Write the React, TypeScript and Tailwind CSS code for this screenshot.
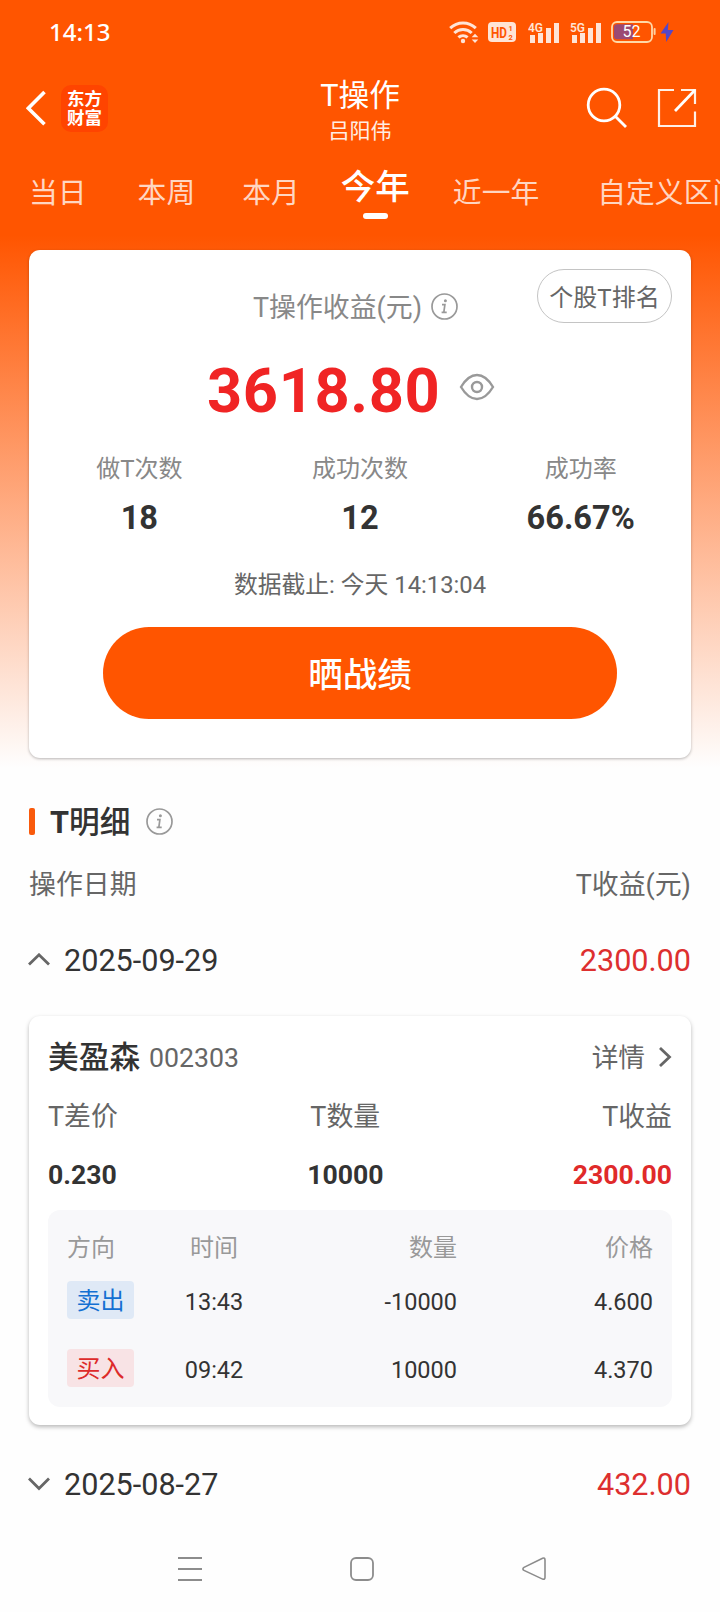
const tabs = [
  { label: '当日', gap: 'ml-[29px]' },
  { label: '本周', gap: 'ml-[51px]' },
  { label: '本月', gap: 'ml-[47px]' },
  { label: '今年', gap: 'ml-[41px]', active: true },
  { label: '近一年', gap: 'ml-[43px]' },
  { label: '自定义区间', gap: 'ml-[58px]' },
]

const stats = [
  { label: '做T次数', value: '18' },
  { label: '成功次数', value: '12' },
  { label: '成功率', value: '66.67%' },
]

const trades = [
  { side: '卖出', tag: 'bg-[#dfe9f6] text-[#1470d2]', time: '13:43', amount: '-10000', price: '4.600' },
  { side: '买入', tag: 'bg-[#f8e3e5] text-[#dd2a2a]', time: '09:42', amount: '10000', price: '4.370' },
]

function InfoIcon() {
  return (
    <svg width="27" height="27" viewBox="0 0 27 27" fill="none" stroke="#999" strokeWidth="1.7">
      <circle cx="13.5" cy="13.5" r="12.5" />
      <circle cx="14.4" cy="7.8" r="1.5" fill="#999" stroke="none" />
      <path d="M11 11.6h2.9l-1.1 7.8h2.9M10.6 19.4h2.4" />
    </svg>
  )
}

function Chevron({ up = false }: { up?: boolean }) {
  return (
    <svg width="22" height="14" viewBox="0 0 22 14" fill="none" stroke="#666" strokeWidth="2.8">
      <path d={up ? 'M1 11.500 11 1.800l10 9.700' : 'M1 1.5l10 10 10-10'} />
    </svg>
  )
}

function Signal({ label }: { label: string }) {
  return (
    <svg width="31" height="24" viewBox="0 0 31 24" fill="#ffe4d6">
      <text x="0" y="11.500" fontSize="13" fontWeight="600" textLength="15" lengthAdjust="spacingAndGlyphs">{label}</text>
      <rect x="2" y="15" width="5" height="8" />
      <rect x="10" y="13" width="5" height="10" />
      <rect x="18" y="8" width="5" height="15" />
      <rect x="26" y="3" width="5" height="20" />
    </svg>
  )
}

function StatusBar() {
  return (
    <div className="h-16 flex items-center pl-[49px] pr-[46px] text-white">
      <span className="font-['Noto_Sans'] font-medium text-[24px] leading-8">14:13</span>
      <div className="ml-auto flex items-center">
        <svg width="30" height="24" viewBox="0 0 30 24" fill="none" stroke="#ffe4d6" strokeWidth="3">
          <path d="M1.2 8.2a18.5 18.5 0 0 1 25.6 0M5.3 13a12.5 12.5 0 0 1 17.4 0M9.4 17.4a7 7 0 0 1 9.2 0" />
          <circle cx="14" cy="21" r="2.2" fill="#ffe4d6" stroke="none" />
          <path d="M22.7 17.3 26 13.8l3.3 3.5zM22.7 19.4h6.6L26 22.9z" fill="#ffe4d6" stroke="none" />
        </svg>
        <svg className="ml-[9px]" width="28" height="20" viewBox="0 0 28 20">
          <rect width="28" height="20" rx="4" fill="#ffe4d6" />
          <g fill="#ff5500" fontWeight="700">
            <text x="3" y="15.500" fontSize="15" textLength="16" lengthAdjust="spacingAndGlyphs">HD</text>
            <text x="20.500" y="9" fontSize="7.500">1</text>
            <text x="20.500" y="18" fontSize="7.500">2</text>
          </g>
        </svg>
        <div className="ml-[12px]"><Signal label="4G" /></div>
        <div className="ml-[11px]"><Signal label="5G" /></div>
        <svg className="ml-[10px]" width="45" height="22" viewBox="0 0 45 22">
          <rect x="1" y="1" width="40" height="20" rx="5" fill="none" stroke="#ffd9a8" strokeWidth="1.8" />
          <path d="M6 3.200h16v15H6a3 3 0 0 1-3-3v-9a3 3 0 0 1 3-3z" fill="#9b4a73" />
          <rect x="42.6" y="7" width="2" height="7" rx="1" fill="#ffd0a0" />
          <text x="11.500" y="16" fontSize="16" fill="#fff" textLength="18">52</text>
        </svg>
        <svg className="ml-[4px]" width="14" height="20" viewBox="0 0 14 20">
          <path d="M8.5 0 0.5 11.5h5.2L6.2 20 13.5 8H7.8z" fill="#5547c8" />
        </svg>
      </div>
    </div>
  )
}

function Header() {
  return (
    <header className="h-[88px] flex justify-between text-white">
      <div className="w-[220px] h-[88px] flex items-center pl-[26px]">
        <svg width="20" height="36" viewBox="0 0 20 36" fill="none" stroke="#fff" strokeWidth="3.6">
          <path d="M18.5 2 2.3 18.3l16.2 16" />
        </svg>
        <div className="ml-[15px] size-[47px] rounded-[10px] bg-[#ff4400] flex flex-col items-center justify-center pt-[2px] text-[17.5px] leading-[19.5px] font-bold">
          <span>东方</span>
          <span>财富</span>
        </div>
      </div>
      <div className="flex flex-col items-center pt-[13px]">
        <h1 className="text-[30.7px] leading-[37px]">T操作</h1>
        <p className="text-[21px] leading-[35px] text-[#ffeee4]">吕阳伟</p>
      </div>
      <div className="w-[220px] h-[88px] flex items-center justify-end pr-[23px]">
        <svg width="42" height="42" viewBox="0 0 42 42" fill="none" stroke="#fff" strokeWidth="2.8">
          <circle cx="18" cy="18" r="15.8" />
          <path d="m28.5 28.5 11.5 11.5" />
        </svg>
        <svg className="ml-[29px]" width="40" height="40" viewBox="0 0 40 40" fill="none" stroke="#fff0e6" strokeWidth="2.2">
          <path d="M17 2H2v36h36V23.5M24 2h14v14" />
          <path d="M18 23 38 2" stroke="#fff" strokeWidth="2.8" />
        </svg>
      </div>
    </header>
  )
}

function Tabs() {
  return (
    <nav className="h-[98px] flex overflow-hidden whitespace-nowrap">
      {tabs.map((tab) =>
        tab.active ? (
          <div key={tab.label} className={`${tab.gap} shrink-0 flex flex-col items-center pt-[14px] text-white`}>
            <span className="text-[34.5px] leading-[42px] font-medium">{tab.label}</span>
            <i className="mt-[5px] w-[25px] h-[6px] rounded-full bg-white" />
          </div>
        ) : (
          <span key={tab.label} className={`${tab.gap} shrink-0 pt-[21px] text-[28.8px] leading-[40px] text-[#ffd6c2]`}>
            {tab.label}
          </span>
        )
      )}
    </nav>
  )
}

function Summary() {
  return (
    <section className="relative mx-[29px] h-[508px] rounded-[11px] bg-white shadow-[0_1px_3px_rgba(0,0,0,0.28)]">
      <button className="absolute right-[19px] top-[19px] w-[135px] h-[54px] pt-[3px] rounded-full border border-[#c4c4c4] text-[24px] leading-none text-[#666]">
        个股T排名
      </button>
      <div className="pt-[38px] pl-[224px] flex items-center">
        <span className="text-[26.9px] leading-[40px] text-[#888]">T操作收益(元)</span>
        <span className="ml-[9px] -mt-[3px]"><InfoIcon /></span>
      </div>
      <div className="mt-[28px] h-[70px] pl-[178px] flex items-center">
        <span className="text-[61.4px] leading-[70px] font-bold tracking-[0.6px] text-[#f02424]">3618.80</span>
        <svg className="ml-[19px] -mt-[8px]" width="36" height="28" viewBox="0 0 36 28" fill="none" stroke="#999" strokeWidth="2.4">
          <path d="M2 14C6.5 6.5 11.5 2 18 2s11.5 4.5 16 12c-4.5 7.5-9.5 12-16 12S6.5 21.5 2 14z" />
          <circle cx="18" cy="14" r="5" />
        </svg>
      </div>
      <div className="mt-[22px] grid grid-cols-3 text-center">
        {stats.map((stat) => (
          <div key={stat.label}>
            <p className="text-[24px] leading-[42px] text-[#888]">{stat.label}</p>
            <p className="mt-[7px] text-[32.6px] leading-[42px] font-bold text-[#333]">{stat.value}</p>
          </div>
        ))}
      </div>
      <p className="mt-[26px] text-center text-[23.8px] leading-[40px] text-[#666]">数据截止: 今天 14:13:04</p>
      <button className="mt-[22px] mx-auto block w-[514px] h-[92px] rounded-full bg-[#ff5500] text-white text-[34.5px] font-medium pt-[5px]">
        晒战绩
      </button>
    </section>
  )
}

function DayRow({ date, profit, open = false }: { date: string; profit: string; open?: boolean }) {
  return (
    <div className="h-[60px] flex items-center pl-[28px] pr-[29px] text-[30.6px]">
      <span className="-mt-[2px]"><Chevron up={open} /></span>
      <span className="ml-[14px] text-[#333]">{date}</span>
      <span className="ml-auto text-[#dd2f2f]">{profit}</span>
    </div>
  )
}

function StockCard() {
  return (
    <section className="mx-[29px] mt-[25px] h-[409px] px-[19px] pt-[20px] rounded-[11px] bg-white shadow-[0_2px_4px_rgba(0,0,0,0.28)]">
      <div className="h-[44px] flex items-center text-[26.7px] text-[#666]">
        <span className="text-[30.7px] font-medium text-[#333]">美盈森</span>
        <span className="ml-[9px]">002303</span>
        <span className="ml-auto">详情</span>
        <svg className="ml-[13px] -mt-[2px]" width="14" height="20" viewBox="0 0 14 20" fill="none" stroke="#666" strokeWidth="2.8">
          <path d="m2 1 9.5 9L2 19" />
        </svg>
      </div>
      <div className="mt-[8px] flex justify-between text-[26.9px] leading-[58px] text-[#666]">
        <div>
          <p>T差价</p>
          <p className="font-bold text-[26.6px] text-[#333]">0.230</p>
        </div>
        <div className="text-center">
          <p>T数量</p>
          <p className="font-bold text-[26.6px] text-[#333]">10000</p>
        </div>
        <div className="text-right">
          <p>T收益</p>
          <p className="font-bold text-[26.6px] text-[#e02a2a]">2300.00</p>
        </div>
      </div>
      <div className="mt-[6px] h-[197px] rounded-[12px] bg-[#f8f8fa] px-[19px] pt-[3px] text-[23.5px] text-[#333]">
        <div className="h-[68px] flex items-center pt-[1px] text-[24px] text-[#999]">
          <span className="w-[67px]">方向</span>
          <span className="w-[160px] text-center">时间</span>
          <span className="w-[163px] text-right">数量</span>
          <span className="ml-auto">价格</span>
        </div>
        {trades.map((trade) => (
          <div key={trade.time} className="h-[38px] mb-[30px] flex items-center leading-[38px]">
            <span className={`w-[67px] h-[38px] rounded-[4px] text-center text-[24px] leading-[40px] ${trade.tag}`}>{trade.side}</span>
            <span className="w-[160px] pt-[3px] text-center">{trade.time}</span>
            <span className="w-[163px] pt-[3px] text-right">{trade.amount}</span>
            <span className="ml-auto pt-[3px]">{trade.price}</span>
          </div>
        ))}
      </div>
    </section>
  )
}

function NavBar() {
  return (
    <div className="mt-[42px] h-[24px] pl-[178px] flex">
      <svg width="24" height="24" viewBox="0 0 24 24" stroke="#8c8c8c" strokeWidth="2">
        <path d="M0 1h24M0 12h24M0 23h24" />
      </svg>
      <svg className="ml-[148px]" width="24" height="24" viewBox="0 0 24 24" fill="none" stroke="#8c8c8c" strokeWidth="1.8">
        <rect x="1" y="1" width="22" height="22" rx="5" />
      </svg>
      <svg className="ml-[148px]" width="24" height="24" viewBox="0 0 24 24" fill="none" stroke="#8c8c8c" strokeWidth="1.6">
        <path d="M20.6 1.2 2 10.4q-2.2 1.5 0 3l18.6 8.7q2.4.7 2.4-1.8V3q0-2.6-2.4-1.8z" />
      </svg>
    </div>
  )
}

export default function App() {
  return (
    <div className="w-[720px] h-[1612px] overflow-hidden bg-[#fefefe] font-[Roboto,'Noto_Sans_CJK_SC',sans-serif]">
      <div className="h-[784px] bg-linear-to-b/srgb from-[#ff5500] from-[30%] to-[#fefefe] to-[98%]">
        <StatusBar />
        <Header />
        <Tabs />
        <Summary />
      </div>
      <div className="mt-[18px] h-[40px] flex items-center pl-[29px]">
        <i className="w-[6px] h-[27px] -mt-[1px] rounded-[2px] bg-[#f95a0c]" />
        <h2 className="ml-[15px] pt-[2px] text-[30.7px] leading-[40px] text-[#333] font-medium"><b>T</b>明细</h2>
        <span className="ml-[16px] -mt-[2px]"><InfoIcon /></span>
      </div>
      <div className="mt-[23px] h-[40px] flex items-center justify-between px-[29px] text-[26.9px] text-[#666]">
        <span>操作日期</span>
        <span>T收益(元)</span>
      </div>
      <div className="mt-[26px]">
        <DayRow date="2025-09-29" profit="2300.00" open />
      </div>
      <StockCard />
      <div className="mt-[30px]">
        <DayRow date="2025-08-27" profit="432.00" />
      </div>
      <NavBar />
    </div>
  )
}
